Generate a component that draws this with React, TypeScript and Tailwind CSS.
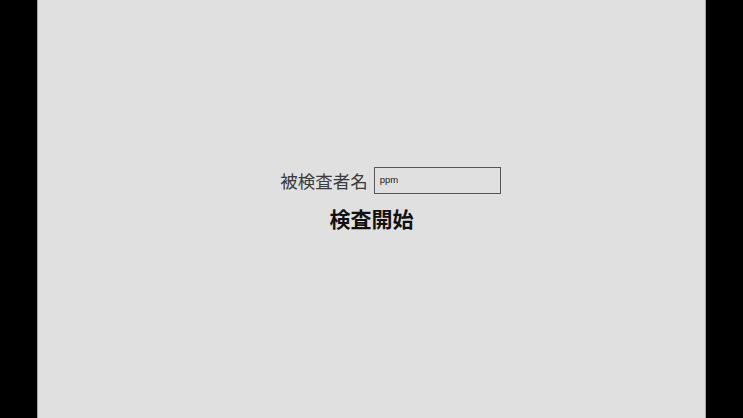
export default function App() {
  return (
    <div className="flex h-[418px] w-[743px] bg-black font-['Noto_Sans_CJK_JP',sans-serif]">
      <div className="ml-[37px] flex h-full w-[669px] flex-col items-center border-x border-[#a8a8a8] bg-[#e0e0e0] pt-[167px]">
        <div className="flex items-center gap-[6px] pl-[38px]">
          <span className="text-[17.5px] leading-none text-[#3a3a3a]">被検査者名</span>
          <div className="flex h-[27px] w-[127px] items-center border-[1.5px] border-[#555] px-[5px]">
            <span className="font-['Liberation_Sans',sans-serif] text-[9.5px] text-[#222]">ppm</span>
          </div>
        </div>
        <button className="mt-[10px] text-[21px] leading-[28px] font-bold text-[#111]">検査開始</button>
      </div>
    </div>
  )
}
